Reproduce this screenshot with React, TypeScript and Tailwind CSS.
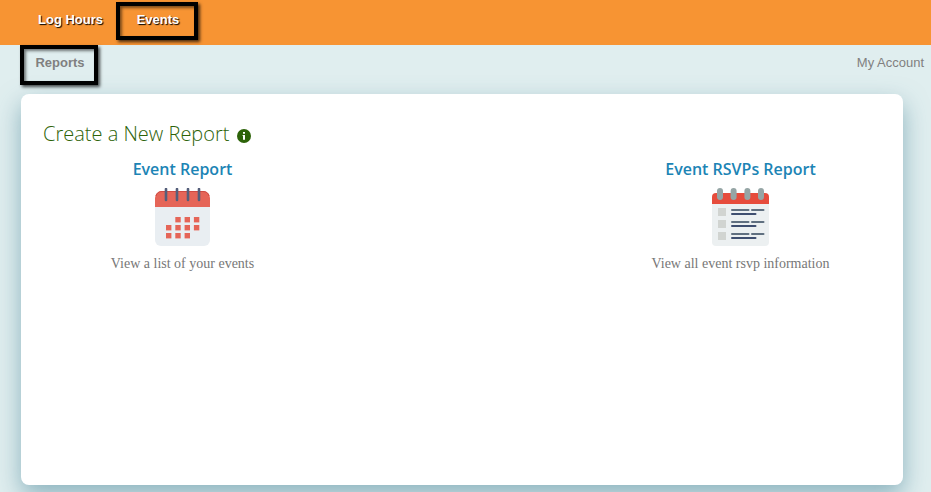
import type { ReactNode } from 'react'

function CalendarIcon() {
  return (
    <svg className="w-[55px] h-[58px]" viewBox="0 0 55 58" aria-hidden="true">
      <path d="M0 19h55v33a6 6 0 0 1-6 6H6a6 6 0 0 1-6-6z" fill="#e9eef2" />
      <path d="M0 19V10a7 7 0 0 1 7-7h41a7 7 0 0 1 7 7v9z" fill="#e56558" />
      <path d="M1 8a6 6 0 0 1 6-4.500h41a6 6 0 0 1 6 4.500" fill="none" stroke="#cf4a42" strokeWidth="1" />
      {[11, 22, 33, 44].map((x) => (
        <path key={x} d={`M${x} 1v11`} stroke="#545e7a" strokeWidth="2.600" strokeLinecap="round" />
      ))}
      {[0, 1, 2].map((row) =>
        [0, 1, 2, 3].map((col) =>
          (row === 0 && col === 0) || (row === 2 && col === 3) ? null : (
            <rect key={`${row}-${col}`} x={11 + col * 9.300} y={29 + row * 8} width="5.400" height="5.400" fill="#e56558" />
          )
        )
      )}
    </svg>
  )
}

function ChecklistIcon() {
  return (
    <svg className="w-[57px] h-[58px]" viewBox="0 0 57 58" aria-hidden="true">
      <path d="M0 16h57v38a4 4 0 0 1-4 4H4a4 4 0 0 1-4-4z" fill="#ecf0f1" />
      <path d="M0 16V9a4 4 0 0 1 4-4h49a4 4 0 0 1 4 4v7z" fill="#e64c3c" />
      {[5, 18.600, 32.400, 46].map((x) => (
        <rect key={x} x={x} y="0" width="6" height="12" rx="3" fill="#95a5a5" />
      ))}
      {[20, 32, 44].map((y) => (
        <g key={y}>
          <rect x="6" y={y} width="8" height="8" fill="#d1d4d1" />
          <path d={`M20 ${y + 2}h16.500M40 ${y + 2}h11.500`} stroke="#607080" strokeWidth="2" strokeLinecap="round" />
          <path d={`M20 ${y + 6}h23.500`} stroke="#3f4f70" strokeWidth="2" strokeLinecap="round" />
        </g>
      ))}
    </svg>
  )
}

type ReportProps = {
  title: string
  description: string
  icon: ReactNode
}

function ReportLink({ title, description, icon }: ReportProps) {
  return (
    <div className="flex flex-col items-center text-center">
      <a href="#" className="flex flex-col items-center gap-[7px]">
        <span className="font-['Open_Sans',sans-serif] text-base leading-6 font-semibold text-[#1c84b5]">
          {title}
        </span>
        {icon}
      </a>
      <p className="mt-2 font-['Liberation_Serif',serif] text-sm leading-5 text-[#777777]">{description}</p>
    </div>
  )
}

export default function App() {
  return (
    <div className="min-h-screen flex flex-col overflow-hidden bg-[#e0eeef] font-['Liberation_Sans',sans-serif] text-[13px]">
      {/* Main navigation */}
      <nav className="h-[45px] flex items-start gap-[13px] pl-[38px] pt-[2px] bg-[#f79433] font-bold text-white">
        <a href="#" className="h-9 flex items-center [text-shadow:1px_1px_1px_#000]">
          Log Hours
        </a>
        <a
          href="#"
          className="w-[82px] h-[38px] flex items-center justify-center border-4 border-black pb-[2px] pl-[2px] shadow-[2px_2px_3px_rgba(0,0,0,0.7),inset_2px_2px_3px_rgba(0,0,0,0.5)] [text-shadow:1px_1px_1px_#000]"
        >
          Events
        </a>
      </nav>

      {/* Sub navigation */}
      <nav className="flex items-start justify-between pl-5 pr-[7px] text-[#808080]">
        <a
          href="#"
          className="w-[78px] h-10 flex items-center justify-center border-4 border-black pb-1 pl-[2px] font-bold shadow-[2px_2px_3px_rgba(0,0,0,0.7),inset_2px_2px_3px_rgba(0,0,0,0.5)]"
        >
          Reports
        </a>
        <a href="#" className="h-9 flex items-center">
          My Account
        </a>
      </nav>

      <main className="flex-1 mt-[9px] mb-[7px] ml-[21px] mr-7 px-[22px] pt-6 rounded-lg bg-white shadow-[0_10px_24px_rgba(70,130,150,0.55)]">
        <div className="flex items-center gap-2">
          <h1 className="font-['Open_Sans',sans-serif] text-xl leading-8 font-light text-[#2d6309]">
            Create a New Report
          </h1>
          <button type="button" aria-label="About reports" className="mt-1">
            <svg className="w-[14px] h-[14px]" viewBox="0 0 14 14" aria-hidden="true">
              <circle cx="7" cy="7" r="7" fill="#2d6309" />
              <path d="M6 3h2v1.700H6zM5.600 6H8v4.800H6V7h-.4z" fill="#fff" />
            </svg>
          </button>
        </div>

        <div className="mt-[7px] mr-px grid grid-cols-3">
          <ReportLink title="Event Report" description="View a list of your events" icon={<CalendarIcon />} />
          <div className="col-start-3">
            <ReportLink
              title="Event RSVPs Report"
              description="View all event rsvp information"
              icon={<ChecklistIcon />}
            />
          </div>
        </div>
      </main>
    </div>
  )
}
